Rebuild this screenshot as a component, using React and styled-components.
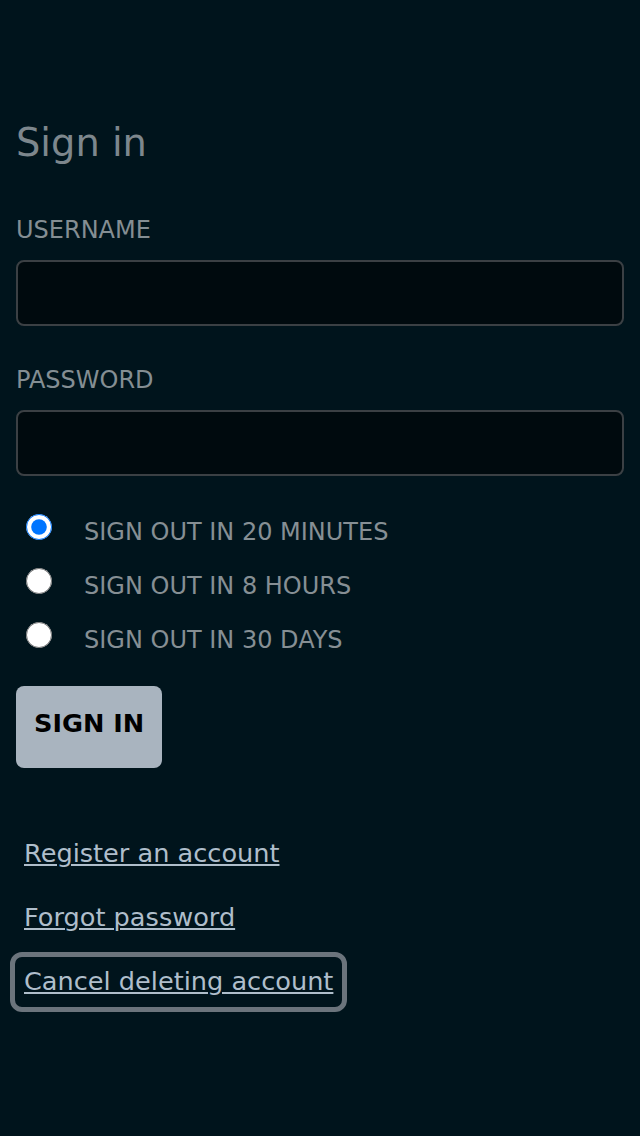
import React, { useState } from 'react'
import styled, { createGlobalStyle } from 'styled-components'

const GlobalStyle = createGlobalStyle`
    html, body {
        margin: 0;
        padding: 0;
        background-color: #00141c;
    }
    body {
        font-family: "DejaVu Sans", "Liberation Sans", sans-serif;
        min-height: 1136px;
    }
`

const Page = styled.main`
    display: flex;
    flex-direction: column;
    align-items: flex-start;
    padding: 120px 16px 0px 16px;
`

const Title = styled.h1`
    margin: 0px;
    font-size: 38.4px;
    font-weight: normal;
    line-height: normal;
    color: #7d878d;
`

const Form = styled.form`
    display: flex;
    flex-direction: column;
    align-self: stretch;
    margin-top: 51px;
`

const Field = styled.div`
    display: flex;
    flex-direction: column;
    margin-bottom: ${ (props) => props.last ? "42px" : "40px" };
`

const Label = styled.label`
    font-size: 24px;
    line-height: 28px;
    color: #848e93;
    text-transform: uppercase;
    margin-bottom: 16px;
`

const Input = styled.input`
    box-sizing: border-box;
    height: 66px;
    width: 100%;
    border: 2px solid #3b4044;
    border-radius: 8px;
    background-color: #000a0e;
    color: #c8d2d9;
    font-family: inherit;
    font-size: 24px;
    padding: 0px 14px;
    outline: none;
`

const RadioGroup = styled.div`
    display: flex;
    flex-direction: column;
    gap: 26px;
`

const RadioRow = styled.label`
    display: flex;
    align-items: flex-start;
    gap: 32px;
    font-size: 24px;
    line-height: 28px;
    color: #868f94;
    text-transform: uppercase;
`

const Radio = styled.input`
    width: 26px;
    height: 26px;
    margin: -4px 0px 0px 10px;
    flex-shrink: 0;
`

const SubmitButton = styled.button`
    align-self: flex-start;
    margin-top: 32px;
    height: 82px;
    padding: 0px 18px 8px 18px;
    border: none;
    border-radius: 8px;
    background-color: #a9b4bf;
    color: #000;
    font-family: inherit;
    font-size: 25.6px;
    font-weight: bold;
    cursor: pointer;
`

const LinkList = styled.nav`
    display: flex;
    flex-direction: column;
    align-items: flex-start;
    gap: 16px;
    margin-top: 62px;
`

const Link = styled.a`
    display: inline-block;
    padding: 8px 8px 10px 8px;
    font-size: 25.6px;
    line-height: normal;
    color: #afbecb;
    text-decoration: underline;
    text-decoration-thickness: 2px;
    text-underline-offset: 2px;
    border-radius: 6px;
    outline: ${ (props) => props.focused ? "5px solid #6b747c" : "none" };
    outline-offset: 1px;
`

const durations = ['Sign out in 20 minutes', 'Sign out in 8 hours', 'Sign out in 30 days']

const links = [
    { id: 1, title: 'Register an account' },
    { id: 2, title: 'Forgot password' },
    { id: 3, title: 'Cancel deleting account', focused: true }
]

export default function App() {
    const [duration, setDuration] = useState(0)

    return (
        <>
            <GlobalStyle />
            <Page>
                <Title>Sign in</Title>
                <Form onSubmit={ (e) => e.preventDefault() }>
                    <Field>
                        <Label htmlFor="username">Username</Label>
                        <Input id="username" type="text" />
                    </Field>
                    <Field last>
                        <Label htmlFor="password">Password</Label>
                        <Input id="password" type="password" />
                    </Field>
                    <RadioGroup>
                        { durations.map((item, i) => (
                            <RadioRow key={item}>
                                <Radio
                                    type="radio"
                                    name="duration"
                                    checked={duration === i}
                                    onChange={ () => setDuration(i) }
                                />
                                <span>{item}</span>
                            </RadioRow>
                        )) }
                    </RadioGroup>
                    <SubmitButton type="submit">SIGN IN</SubmitButton>
                </Form>
                <LinkList>
                    { links.map((item) => (
                        <Link key={item.id} href="#" focused={item.focused}>{item.title}</Link>
                    )) }
                </LinkList>
            </Page>
        </>
    )
}
